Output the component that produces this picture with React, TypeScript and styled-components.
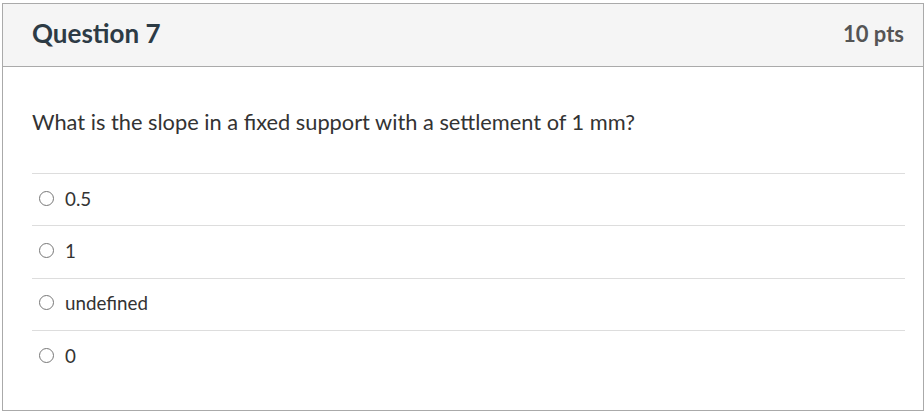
import React from "react";
import styled, { createGlobalStyle } from "styled-components";

const GlobalStyle = createGlobalStyle`
  body {
    margin: 0;
    background: #fff;
    font-family: Lato, "Open Sans", Arial, sans-serif;
  }
`;

const Page = styled.div`
  padding: 3px 1px 0 2px;
`;

const Panel = styled.div`
  border: 1px solid #aaaaaa;
  width: 922px;
  box-sizing: border-box;
  height: 408px;
  background: #fff;
`;

const Header = styled.div`
  display: flex;
  align-items: center;
  justify-content: space-between;
  height: 58px;
  padding: 0 19px 4px 29px;
  background: #f5f5f5;
  border-bottom: 1px solid #aaaaaa;
`;

const Title = styled.h2`
  margin: 0;
  font-size: 26px;
  font-weight: 700;
  color: #2d3b45;
`;

const Points = styled.div`
  font-size: 22px;
  font-weight: 700;
  color: #555;
`;

const Body = styled.div`
  padding: 0 18px 0 29px;
`;

const QuestionText = styled.p`
  margin: 0;
  padding: 42px 0 38px 0;
  font-size: 21.8px;
  line-height: 26px;
  color: #333;
`;

const Answer = styled.label`
  display: flex;
  align-items: center;
  gap: 11px;
  box-sizing: border-box;
  height: 52.3px;
  padding: 0 0 3px 7px;
  border-top: 1px solid #dddddd;
  font-size: 18.8px;
  color: #333;
`;

const Radio = styled.span`
  width: 15px;
  height: 15px;
  border-radius: 50%;
  border: 1.3px solid #777;
  box-sizing: border-box;
  background: #fff;
`;

const answers = ["0.5", "1", "undefined", "0"];

export default function App() {
  return (
    <Page>
      <GlobalStyle />
      <Panel>
        <Header>
          <Title>Question 7</Title>
          <Points>10 pts</Points>
        </Header>
        <Body>
          <QuestionText>
            What is the slope in a fixed support with a settlement of 1 mm?
          </QuestionText>
          {answers.map((a) => (
            <Answer key={a}>
              <Radio />
              {a}
            </Answer>
          ))}
        </Body>
      </Panel>
    </Page>
  );
}
